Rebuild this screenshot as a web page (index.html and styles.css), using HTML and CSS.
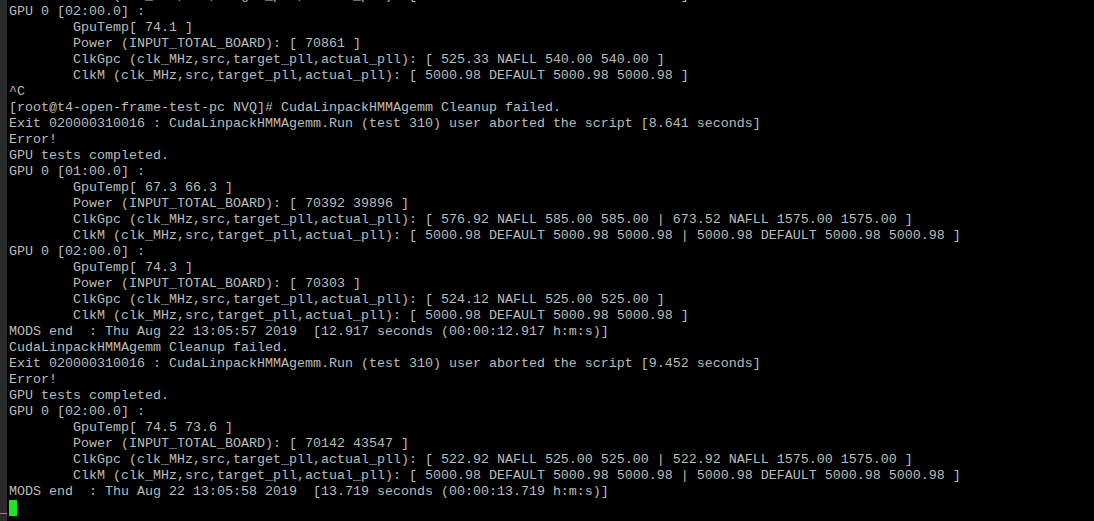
FILE: index.html
```html
<!DOCTYPE html>
<html lang="en">
<head>
<meta charset="utf-8">
<title>Terminal</title>
<link rel="stylesheet" href="styles.css">
</head>
<body>
<div class="window">
  <div class="edge"></div>
  <div class="term">
<pre class="output">        ClkM (clk_MHz,src,target_pll,actual_pll): [ 5000.98 DEFAULT 5000.98 5000.98 ]
GPU 0 [02:00.0] :
        GpuTemp[ 74.1 ]
        Power (INPUT_TOTAL_BOARD): [ 70861 ]
        ClkGpc (clk_MHz,src,target_pll,actual_pll): [ 525.33 NAFLL 540.00 540.00 ]
        ClkM (clk_MHz,src,target_pll,actual_pll): [ 5000.98 DEFAULT 5000.98 5000.98 ]
^C
[root@t4-open-frame-test-pc NVQ]# CudaLinpackHMMAgemm Cleanup failed.
Exit 020000310016 : CudaLinpackHMMAgemm.Run (test 310) user aborted the script [8.641 seconds]
Error!
GPU tests completed.
GPU 0 [01:00.0] :
        GpuTemp[ 67.3 66.3 ]
        Power (INPUT_TOTAL_BOARD): [ 70392 39896 ]
        ClkGpc (clk_MHz,src,target_pll,actual_pll): [ 576.92 NAFLL 585.00 585.00 | 673.52 NAFLL 1575.00 1575.00 ]
        ClkM (clk_MHz,src,target_pll,actual_pll): [ 5000.98 DEFAULT 5000.98 5000.98 | 5000.98 DEFAULT 5000.98 5000.98 ]
GPU 0 [02:00.0] :
        GpuTemp[ 74.3 ]
        Power (INPUT_TOTAL_BOARD): [ 70303 ]
        ClkGpc (clk_MHz,src,target_pll,actual_pll): [ 524.12 NAFLL 525.00 525.00 ]
        ClkM (clk_MHz,src,target_pll,actual_pll): [ 5000.98 DEFAULT 5000.98 5000.98 ]
MODS end  : Thu Aug 22 13:05:57 2019  [12.917 seconds (00:00:12.917 h:m:s)]
CudaLinpackHMMAgemm Cleanup failed.
Exit 020000310016 : CudaLinpackHMMAgemm.Run (test 310) user aborted the script [9.452 seconds]
Error!
GPU tests completed.
GPU 0 [02:00.0] :
        GpuTemp[ 74.5 73.6 ]
        Power (INPUT_TOTAL_BOARD): [ 70142 43547 ]
        ClkGpc (clk_MHz,src,target_pll,actual_pll): [ 522.92 NAFLL 525.00 525.00 | 522.92 NAFLL 1575.00 1575.00 ]
        ClkM (clk_MHz,src,target_pll,actual_pll): [ 5000.98 DEFAULT 5000.98 5000.98 | 5000.98 DEFAULT 5000.98 5000.98 ]
MODS end  : Thu Aug 22 13:05:58 2019  [13.719 seconds (00:00:13.719 h:m:s)]
<span class="cursor"> </span></pre>
  </div>
</div>
</body>
</html>
```

FILE: styles.css
```css
html, body {
  margin: 0;
  padding: 0;
  background: #000;
  height: 100%;
  overflow: hidden;
}

.window {
  display: flex;
  height: 521px;
  background: #000;
}

.edge {
  flex: 0 0 7px;
  background: linear-gradient(to bottom, #2a2a2a 513px, #8a8a8a 513px, #8a8a8a 514px, #2a2a2a 514px);
}

.term {
  flex: 1;
  padding-left: 2px;
  overflow: hidden;
}

.output {
  margin: -12px 0 0 0;
  font-family: "Liberation Mono", "Courier New", monospace;
  font-size: 13.333px;
  line-height: 16px;
  color: #bbbbbb;
  white-space: pre;
}

.cursor {
  display: inline-block;
  width: 8px;
  height: 16px;
  vertical-align: top;
  background: #1ee61e;
}
```
